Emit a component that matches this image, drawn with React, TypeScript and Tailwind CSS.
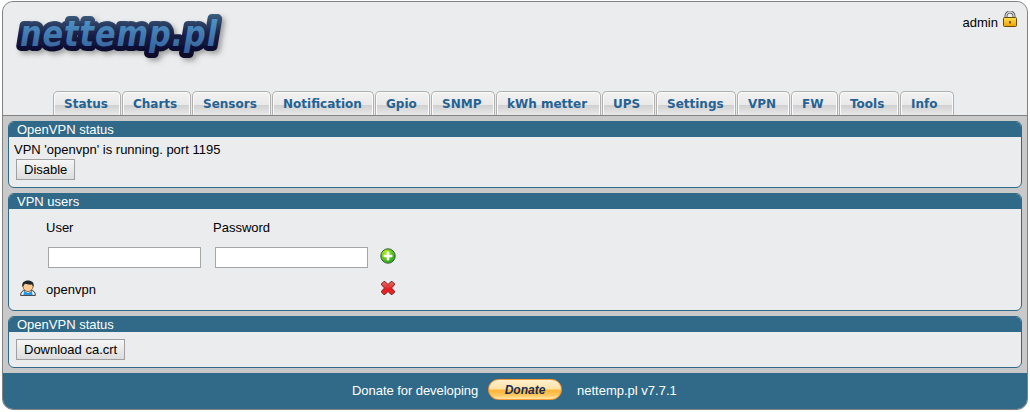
import type { ReactNode } from "react";

const tabs: { label: string; width: string }[] = [
  { label: "Status", width: "w-[68px]" },
  { label: "Charts", width: "w-[69px]" },
  { label: "Sensors", width: "w-[79px]" },
  { label: "Notification", width: "w-[102px]" },
  { label: "Gpio", width: "w-[55px]" },
  { label: "SNMP", width: "w-[64px]" },
  { label: "kWh metter", width: "w-[105px]" },
  { label: "UPS", width: "w-[53px]" },
  { label: "Settings", width: "w-[80px]" },
  { label: "VPN", width: "w-[53px]" },
  { label: "FW", width: "w-[47px]" },
  { label: "Tools", width: "w-[60px]" },
  { label: "Info", width: "w-[54px]" },
];

function Logo() {
  const common = {
    x: 16,
    y: 41,
    textLength: 198,
    lengthAdjust: "spacingAndGlyphs" as const,
    fontFamily: '"DejaVu Sans Condensed", "DejaVu Sans", sans-serif',
    fontSize: 36,
    fontWeight: 700,
    fontStyle: "italic",
    letterSpacing: 1,
  };
  return (
    <svg width="232" height="70" viewBox="0 0 232 70" aria-label="nettemp.pl">
      <defs>
        <linearGradient id="face" x1="0" y1="12" x2="0" y2="50" gradientUnits="userSpaceOnUse">
          <stop offset="0" stopColor="#4f97c8" />
          <stop offset="1" stopColor="#335a96" />
        </linearGradient>
        <linearGradient id="edge" x1="0" y1="9" x2="0" y2="48" gradientUnits="userSpaceOnUse">
          <stop offset="0" stopColor="#3d5f80" />
          <stop offset="0.5" stopColor="#1b2148" />
          <stop offset="1" stopColor="#0a082c" />
        </linearGradient>
        <filter id="shade" x="-10%" y="-20%" width="120%" height="150%">
          <feDropShadow dx="3" dy="3" stdDeviation="2.5" floodColor="#555" floodOpacity="0.5" />
        </filter>
      </defs>
      <text {...common} fill="url(#edge)" stroke="url(#edge)" strokeWidth="10" strokeLinejoin="round" filter="url(#shade)">
        nettemp.pl
      </text>
      <text {...common} fill="url(#face)" aria-hidden="true">
        nettemp.pl
      </text>
    </svg>
  );
}

function Lock() {
  return (
    <svg width="16" height="16" viewBox="0 0 16 16">
      <defs>
        <linearGradient id="gold" x1="0" y1="0" x2="0" y2="1">
          <stop offset="0" stopColor="#ffe24a" />
          <stop offset="1" stopColor="#f0a000" />
        </linearGradient>
      </defs>
      <path d="M4 8V5a4 4 0 0 1 8 0v3" fill="none" stroke="#555" strokeWidth="3" />
      <path d="M4 8V5a4 4 0 0 1 8 0v3" fill="none" stroke="#d8d8d8" strokeWidth="1.3" />
      <rect x="1.500" y="6.500" width="13" height="9" rx="1" fill="url(#gold)" stroke="#65480c" />
      <path d="M8 10v2.500" stroke="#50350a" strokeWidth="1.500" />
    </svg>
  );
}

function Person() {
  return (
    <svg width="16" height="16" viewBox="0 0 16 16">
      <path d="M.6 15.400C.6 12 2.600 10.500 5 10.200h6c2.400.3 4.400 1.800 4.400 5.200z" fill="#eef4fa" stroke="#34383f" />
      <path d="M4 10.700 8 13l4-2.300 .5 4.300h-9z" fill="#2d94dc" />
      <path d="M5.500 10 8 12.500 10.500 10z" fill="#f4bd83" />
      <ellipse cx="8" cy="6.600" rx="4.900" ry="4.900" fill="#ffcb93" stroke="#795030" strokeWidth=".8" />
      <path d="M2.400 7C1.400 2.500 4.300.4 8 .4s6.600 2.100 5.600 6.600L12.200 4.600C9 4.800 6.500 4.300 5 3.800z" fill="#222529" />
    </svg>
  );
}

function Add() {
  return (
    <svg width="16" height="16" viewBox="0 0 16 16">
      <defs>
        <radialGradient id="green" cx=".35" cy=".25" r=".8">
          <stop offset="0" stopColor="#b0ef20" />
          <stop offset="1" stopColor="#20a51c" />
        </radialGradient>
      </defs>
      <circle cx="8" cy="8" r="7.200" fill="url(#green)" stroke="#335f35" />
      <path d="M8 4.800v6.400M4.800 8h6.400" stroke="#fff" strokeWidth="2.700" strokeLinecap="round" />
    </svg>
  );
}

function Remove() {
  return (
    <svg width="16" height="16" viewBox="0 0 16 16">
      <defs>
        <linearGradient id="red" x1="0" y1="0" x2="0" y2="1">
          <stop offset="0" stopColor="#f0706a" />
          <stop offset=".6" stopColor="#e51c20" />
          <stop offset="1" stopColor="#f32b29" />
        </linearGradient>
      </defs>
      <path
        d="M4 1.300Q5.200 1.300 8 4.600 10.800 1.300 12 1.300L14.700 4Q14.700 5.200 11.400 8q3.300 2.800 3.300 4L12 14.700Q10.800 14.700 8 11.400 5.200 14.700 4 14.700L1.300 12Q1.300 10.800 4.600 8 1.300 5.200 1.300 4z"
        fill="url(#red)"
        stroke="#6d2520"
        strokeLinejoin="round"
      />
    </svg>
  );
}

function Panel({ title, height, children }: { title: string; height: string; children: ReactNode }) {
  return (
    <section className={`${height} shrink-0 overflow-hidden rounded-[6px] border border-[#306a88] bg-[#ebeced]`}>
      <h2 className="h-[15px] bg-[#306a88] pl-2 leading-[15px] text-white">{title}</h2>
      {children}
    </section>
  );
}

function Button({ children }: { children: ReactNode }) {
  return (
    <button className="block h-[21px] border border-[#a0a0a0] bg-linear-to-b from-[#f6f6f6] to-[#dddddd] px-[7px] leading-[19px]">
      {children}
    </button>
  );
}

export default function App() {
  return (
    <div className="h-[412px] bg-white pt-px pl-[2px] font-['Liberation_Sans',Arial,sans-serif] text-[13px] text-black">
      <div className="flex h-[409px] w-[1026px] flex-col overflow-hidden rounded-[11px] border border-[#828282] bg-[#c9c9c9]">
        <header className="flex h-[114px] shrink-0 flex-col justify-between border-b border-[#828282] bg-[#ebeced]">
          <div className="flex items-start justify-between">
            <div className="pt-[3px] pl-px">
              <Logo />
            </div>
            <div className="flex items-start gap-1 pt-[9px] pr-[9px]">
              <span className="pt-[4px] leading-[15px]">admin</span>
              <Lock />
            </div>
          </div>
          <nav className="flex gap-px pl-[50px] font-['DejaVu_Sans',Verdana,sans-serif] text-[12px] font-bold text-[#246294]">
            {tabs.map((tab) => (
              <a
                key={tab.label}
                href="#"
                className={`${tab.width} h-[24px] shrink-0 rounded-t-[5px] border border-b-0 border-[#b0b0ae] bg-[linear-gradient(#f2f2f2_0,#e9e9e9_13px,#d0d0d0_13px,#ebebeb_24px)] pl-[10px] leading-[24px] whitespace-nowrap shadow-[inset_1px_1px_0_#fafafa,inset_-1px_0_0_#fafafa]`}
              >
                {tab.label}
              </a>
            ))}
          </nav>
        </header>
        <main className="flex h-[257px] shrink-0 flex-col gap-[5px] px-[5px] pt-[5px]">
          <Panel title="OpenVPN status" height="h-[67px]">
            <div className="pl-[5px]">
              <p className="pt-[5px] leading-[15px]">VPN &apos;openvpn&apos; is running. port 1195</p>
              <div className="pt-[2px] pl-[2px]">
                <Button>Disable</Button>
              </div>
            </div>
          </Panel>
          <Panel title="VPN users" height="h-[118px]">
            <div className="grid grid-cols-[37px_167px_165px_30px] grid-rows-[37px_23px_41px] items-center">
              <span />
              <span>User</span>
              <span>Password</span>
              <span />
              <span />
              <input aria-label="User" className="ml-[2px] h-[21px] w-[153px] border border-[#a5a5a5] bg-white px-1 outline-none" />
              <input aria-label="Password" type="password" className="ml-[2px] h-[21px] w-[153px] border border-[#a5a5a5] bg-white px-1 outline-none" />
              <span className="pb-[3px] pl-[2px]">
                <Add />
              </span>
              <span className="pb-[4px] pl-[11px]">
                <Person />
              </span>
              <span>openvpn</span>
              <span />
              <span className="pb-[4px] pl-[2px]">
                <Remove />
              </span>
            </div>
          </Panel>
          <Panel title="OpenVPN status" height="h-[52px]">
            <div className="pt-[7px] pl-[7px]">
              <Button>Download ca.crt</Button>
            </div>
          </Panel>
        </main>
        <footer className="flex grow items-center bg-[#306a88] pl-[349px] text-white">
          <span className="w-[136px] tracking-[-0.05px]">Donate for developing</span>
          <button className="mb-[3px] h-[21px] w-[74px] rounded-full border border-[#ff9933] bg-[linear-gradient(#fff0d0_0,#ffe2a4_9px,#ffb436_10px,#ffc65a_15px,#ffe8a8_19px)] text-[12px] leading-[18px] font-bold text-[#152b56] italic">
            Donate
          </button>
          <span className="pl-[15px]">nettemp.pl v7.7.1</span>
        </footer>
      </div>
    </div>
  );
}
